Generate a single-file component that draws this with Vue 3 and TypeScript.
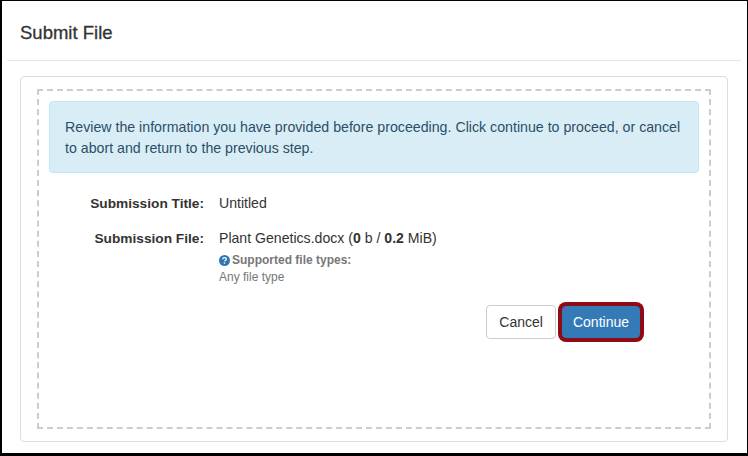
<script setup lang="ts">
interface Row {
  label: string
  value: string
}

const titleRow: Row = { label: 'Submission Title:', value: 'Untitled' }
</script>

<template>
  <div class="frame">
    <h1 class="heading">Submit File</h1>
    <div class="content">
      <div class="panel">
        <div class="dropzone">
          <div class="alert">
            Review the information you have provided before proceeding. Click continue to proceed, or cancel
            to abort and return to the previous step.
          </div>

          <div class="row first">
            <div class="label">{{ titleRow.label }}</div>
            <div class="value">{{ titleRow.value }}</div>
          </div>

          <div class="row second">
            <div class="label">Submission File:</div>
            <div class="value">
              Plant Genetics.docx (<b>0</b> b / <b>0.2</b> MiB)
              <div class="hint">
                <div class="hint-title">
                  <svg class="help" viewBox="0 0 16 16" width="11" height="11" aria-hidden="true">
                    <circle cx="8" cy="8" r="8" fill="#2d76b5" />
                    <path d="M5.4 6.2c.1-1.6 1.2-2.5 2.7-2.5s2.6.9 2.6 2.1c0 1-.6 1.5-1.3 2-.6.4-.9.7-.9 1.4" fill="none" stroke="#fff" stroke-width="1.9" />
                    <rect x="6.9" y="10.6" width="2" height="2" fill="#fff" />
                  </svg>
                  <b>Supported file types:</b>
                </div>
                <div class="hint-text">Any file type</div>
              </div>
            </div>
          </div>

          <div class="actions">
            <button class="btn" type="button">Cancel</button>
            <button class="btn primary" type="button">Continue</button>
          </div>
        </div>
      </div>
    </div>
  </div>
</template>

<style>
html,
body {
  margin: 0;
  background: #000;
}
</style>

<style scoped>
.frame {
  box-sizing: border-box;
  width: 745px;
  height: 452px;
  margin: 1px 0 0 2px;
  background: #fff;
  font-family: "Liberation Sans", Arial, sans-serif;
  font-size: 14px;
  color: #333;
  overflow: hidden;
}

.heading {
  margin: 0 6px 0 5px;
  height: 60px;
  box-sizing: border-box;
  padding: 20px 0 0 13px;
  border-bottom: 1px solid #e5e5e5;
  font-size: 18.5px;
  line-height: 24px;
  font-weight: 400;
  -webkit-text-stroke: 0.3px #333;
}

.content {
  padding: 15px 19px 0 18px;
}

.panel {
  box-sizing: border-box;
  height: 366px;
  padding: 12px 16px;
  border: 1px solid #ddd;
  border-radius: 4px;
}

.dropzone {
  box-sizing: border-box;
  height: 340px;
  padding: 10px;
  border: 2px dashed #ccc;
}

.alert {
  box-sizing: border-box;
  height: 72px;
  padding: 15px 15px 14px;
  background: #d9edf7;
  border: 1px solid #bce8f1;
  border-radius: 4px;
  color: #2c4f66;
  line-height: 21px;
  font-size: 14.2px;
}

.row {
  display: flex;
  align-items: baseline;
  line-height: 20px;
}

.first {
  margin-top: 20px;
}

.second {
  margin-top: 14px;
}

.label {
  width: 155px;
  flex: none;
  text-align: right;
  font-size: 13.7px;
  font-weight: 700;
}

.value {
  padding-left: 15px;
  font-size: 14.1px;
}

.hint {
  margin-top: 5px;
  font-size: 12px;
  line-height: 15px;
  color: #777;
}

.hint-title {
  display: flex;
  align-items: center;
  gap: 2px;
}

.hint-text {
  margin-top: 2px;
}

.help {
  flex: none;
}

.actions {
  display: flex;
  justify-content: flex-end;
  align-items: center;
  gap: 6px;
  margin-top: 20px;
  padding-right: 59px;
}

.btn {
  height: 34px;
  padding: 0 12px;
  background: #fff;
  border: 1px solid #ccc;
  border-radius: 4px;
  color: #333;
  font: 14px/20px "Liberation Sans", Arial, sans-serif;
}

.primary {
  height: 32px;
  padding: 0 10px;
  background: #337ab7;
  border-color: #337ab7;
  color: #fff;
  box-shadow: 0 0 0 4px #8f0b16;
}
</style>
